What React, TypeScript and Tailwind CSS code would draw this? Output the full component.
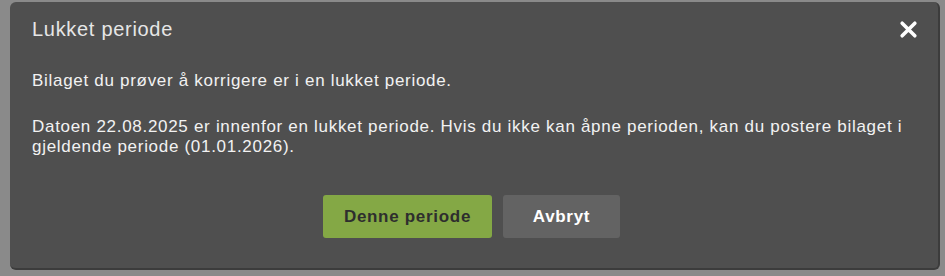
export default function App() {
  return (
    <div className="w-[945px] h-[276px] bg-[#8a8a8a] pt-[2px] pl-[10px] font-['Liberation_Sans',Arial,sans-serif]">
      <div className="w-[930px] h-[268px] bg-[#4f4f4f] rounded-[6px] border-r-2 border-b-2 border-[#3c3c3c] flex flex-col">
        <div className="flex items-center justify-between h-[54px] pl-[22px] pr-[20px]">
          <span className="text-[20px] tracking-[0.7px] text-[#e6e6e6]">Lukket periode</span>
          <svg width="19" height="19" viewBox="0 0 18 18" className="mt-[1px]">
            <path d="M3 3 L15 15 M15 3 L3 15" stroke="#ffffff" strokeWidth="3.4" strokeLinecap="round" />
          </svg>
        </div>
        <div className="px-[22px] pt-[15px] text-[17px] tracking-[0.7px] leading-[20px] text-[#f2f2f2]">
          <p>Bilaget du prøver å korrigere er i en lukket periode.</p>
          <p className="mt-[26px]">
            Datoen 22.08.2025 er innenfor en lukket periode. Hvis du ikke kan åpne perioden, kan du postere bilaget i gjeldende periode (01.01.2026).
          </p>
        </div>
        <div className="flex justify-center gap-[11px] mt-[38px] pr-[5px]">
          <button className="w-[169px] h-[43px] bg-[#84a845] rounded-[3px] text-[17px] tracking-[0.7px] font-bold text-[#2e2e2e]">Denne periode</button>
          <button className="w-[117px] h-[43px] bg-[#636363] rounded-[3px] text-[17px] tracking-[0.7px] font-bold text-white">Avbryt</button>
        </div>
      </div>
    </div>
  );
}
